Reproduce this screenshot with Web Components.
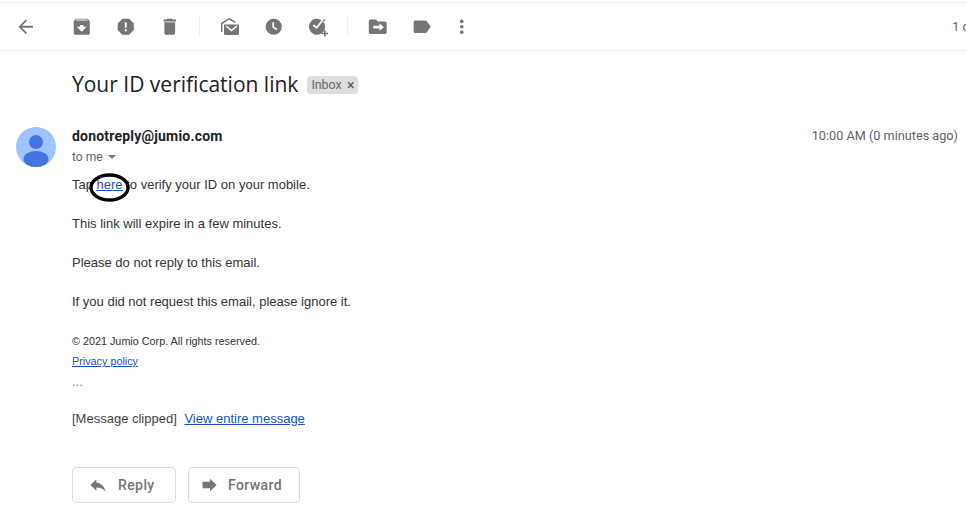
<!DOCTYPE html>
<html>
<head>
<meta charset="utf-8">
<title>Your ID verification link</title>
<style>
html, body { margin: 0; height: 514px; overflow: hidden; background: #fff; }
body { font-family: Roboto, "Liberation Sans", sans-serif; color: #222; }
a { color: #15c; }
</style>
</head>
<body>
<mail-view>
  <mail-toolbar></mail-toolbar>
  <mail-subject>Your ID verification link</mail-subject>
  <mail-header></mail-header>
  <mail-body>
    <mail-para>Tap <a href="#">here</a> to verify your ID on your mobile.</mail-para>
    <mail-para>This link will expire in a few minutes.</mail-para>
    <mail-para>Please do not reply to this email.</mail-para>
    <mail-para>If you did not request this email, please ignore it.</mail-para>
  </mail-body>
  <mail-actions></mail-actions>
</mail-view>

<script>
const ICONS = {
  back: '<path d="M20 11H7.83l5.59-5.59L12 4l-8 8 8 8 1.41-1.41L7.83 13H20v-2z"/>',
  archive: '<path d="M20.54 5.23l-1.39-1.68C18.88 3.21 18.47 3 18 3H6c-.47 0-.88.21-1.16.55L3.46 5.23C3.17 5.57 3 6.02 3 6.5V19c0 1.1.9 2 2 2h14c1.1 0 2-.9 2-2V6.5c0-.48-.17-.93-.46-1.27zM12 17.5L6.5 12H10v-2h4v2h3.5L12 17.5zM5.12 5l.81-1h12l.94 1H5.12z"/>',
  spam: '<path d="M15.73 3H8.27L3 8.27v7.46L8.27 21h7.46L21 15.73V8.27L15.73 3zM12 17.3c-.72 0-1.3-.58-1.3-1.3 0-.72.58-1.3 1.3-1.3.72 0 1.3.58 1.3 1.3 0 .72-.58 1.3-1.3 1.3zm1-4.3h-2V7h2v6z"/>',
  trash: '<path d="M6 19c0 1.1.9 2 2 2h8c1.1 0 2-.9 2-2V7H6v12zM19 4h-3.5l-1-1h-5l-1 1H5v2h14V4z"/>',
  snooze: '<path fill-rule="evenodd" d="M12 3a9 9 0 1 0 0 18 9 9 0 0 0 0-18zM10.4 7h1.8v5l3.9 2.3-.9 1.5-4.8-2.9V7z"/>',
  task: '<path fill-rule="evenodd" d="M11 3a9 9 0 0 1 5.2 1.7l-5.6 7-3-2.4-1.3 1.6 4.6 3.6 6.9-8.6A9 9 0 1 1 11 3z"/><path d="M19 16h1.8v2.6h2.7v1.8h-2.7V23H19v-2.6h-2.6v-1.8H19V16z"/><path d="M19.3 3.5l1.2.9-1.5 1.9-1.2-.9z"/>',
  move: '<path fill-rule="evenodd" d="M4 4h6l2 2h8a2 2 0 0 1 2 2v10a2 2 0 0 1-2 2H4a2 2 0 0 1-2-2V6a2 2 0 0 1 2-2zm10 4.5V11H7v3h7v2.5l5-4-5-4z"/>',
  label: '<path d="M17.63 5.84C17.27 5.33 16.67 5 16 5L5 5.01C3.9 5.01 3 5.9 3 7v10c0 1.1.9 1.99 2 1.99L16 19c.67 0 1.27-.33 1.63-.84L22 12l-4.37-6.16z"/>',
  more: '<circle cx="12" cy="6" r="2"/><circle cx="12" cy="12" r="2"/><circle cx="12" cy="18" r="2"/>',
  reply: '<path d="M10 9V5l-7 7 7 7v-4.1c5 0 8.5 1.6 11 5.1-1-5-4-10-11-11z"/>',
  forward: '<path d="M12 4.5l8 7.5-8 7.5V16H3V8h9V4.5z"/>'
};

function icon(name, size) {
  return `<svg width="${size}" height="${size}" viewBox="0 0 24 24" fill="#757575">${ICONS[name]}</svg>`;
}

// the open envelope is drawn 1:1, it does not follow the material grid
const UNREAD = `<svg width="24" height="24" viewBox="0 0 24 24" fill="#757575">
  <path d="M3.7 17V8.5L11 3.8l6.5 3.6" fill="none" stroke="#757575" stroke-width="1.5"/>
  <path d="M6 9.5h15v9a1.5 1.5 0 0 1-1.5 1.5h-12A1.5 1.5 0 0 1 6 18.5z"/>
  <path d="M8 11l5.5 4.5L19 11" fill="none" stroke="#fff" stroke-width="1.5"/>
</svg>`;

class MailView extends HTMLElement {
  constructor() {
    super();
    this.attachShadow({mode: 'open'}).innerHTML = `<style>
      :host { display: flex; flex-direction: column; padding-top: 2px; }
    </style><slot></slot>`;
  }
}

class MailToolbar extends HTMLElement {
  constructor() {
    super();
    const btn = n => `<span class="btn">${icon(n, 21.5)}</span>`;
    this.attachShadow({mode: 'open'}).innerHTML = `<style>
      :host {
        display: flex; align-items: center; height: 47px; overflow: hidden;
        border-top: 1px solid #eee; border-bottom: 1px solid #eee;
        padding-left: 14px;
      }
      .btn { display: flex; justify-content: center; align-items: center; flex: none; width: 24px; height: 24px; }
      .btn svg { display: block; }
      .group { display: flex; gap: 20px; }
      .sep { width: 1px; height: 20px; background: #eee; margin: 0 18px 0 17px; flex: none; }
      .count { margin-left: auto; margin-right: -18px; font: 12.5px Roboto, sans-serif; color: #666; white-space: nowrap; }
    </style>
    <span class="btn" style="margin-right:32px">${icon('back', 21.5)}</span>
    <div class="group">${btn('archive')}${btn('spam')}${btn('trash')}</div>
    <span class="sep"></span>
    <div class="group"><span class="btn">${UNREAD}</span>${btn('snooze')}${btn('task')}</div>
    <span class="sep"></span>
    <div class="group">${btn('move')}${btn('label')}<span class="btn" style="margin-left:-4px">${icon('more', 21.5)}</span></div>
    <span class="count">1 of 2</span>`;
  }
}

class MailSubject extends HTMLElement {
  constructor() {
    super();
    this.attachShadow({mode: 'open'}).innerHTML = `<style>
      :host { display: flex; align-items: center; padding: 18px 0 0 72px; height: 31px; }
      h1 { margin: 0; font: 400 21px/31px "Open Sans", Roboto, sans-serif; color: #222; }
      .tag {
        display: inline-flex; align-items: center; justify-content: space-between; box-sizing: border-box;
        width: 51px; height: 18px; margin: 0 0 0 9px; padding: 0 4px; border-radius: 4px; background: #ddd;
        font: 12.4px Roboto, sans-serif; color: #666;
      }
      .x { font-size: 14px; color: #555; }
    </style>
    <h1><slot></slot></h1><span class="tag">Inbox <span class="x">×</span></span>`;
  }
}

class MailHeader extends HTMLElement {
  constructor() {
    super();
    this.attachShadow({mode: 'open'}).innerHTML = `<style>
      :host { display: flex; padding: 27px 8px 0 16px; }
      svg { display: block; flex: none; margin-right: 16px; }
      .who { flex: 1; }
      .from { font: 700 14px/18px Roboto, sans-serif; letter-spacing: .2px; color: #222; }
      .to { font: 12px/20px Roboto, sans-serif; color: #5f6368; display: flex; align-items: center; gap: 5px; margin-top: 2px; }
      .caret { width: 0; height: 0; border: 4.5px solid transparent; border-top: 4.5px solid #777; border-bottom: 0; }
      .time { font: 12.7px/18px Roboto, sans-serif; color: #5f6368; }
    </style>
    <svg width="40" height="40" viewBox="0 0 40 40">
      <circle cx="20" cy="20" r="20" fill="#a0c3ff"/>
      <circle cx="20" cy="15" r="7" fill="#4374e0"/>
      <ellipse cx="20" cy="32" rx="12.5" ry="8" fill="#4374e0"/>
    </svg>
    <div class="who">
      <div class="from">donotreply@jumio.com</div>
      <div class="to">to me <span class="caret"></span></div>
    </div>
    <div class="time">10:00 AM (0 minutes ago)</div>`;
  }
}

class MailPara extends HTMLElement {
  constructor() {
    super();
    this.attachShadow({mode: 'open'}).innerHTML = `<style>
      :host { display: block; margin-bottom: 24px; font: 13px/15px "Liberation Sans", Arial, sans-serif; color: #333; }
    </style><slot></slot>`;
  }
}

class MailBody extends HTMLElement {
  constructor() {
    super();
    this.attachShadow({mode: 'open'}).innerHTML = `<style>
      :host { display: block; position: relative; padding: 0 0 0 72px; margin-top: 10px; font: 13px "Liberation Sans", Arial, sans-serif; color: #333; }
      .ring { position: absolute; left: 88px; top: -4px; }
      .foot { font-size: 10.8px; line-height: 13px; margin-top: 26px; }
      .foot div { margin-bottom: 7px; }
      .foot .dots { font-size: 13px; color: #888; }
      a { color: #15c; }
      .clip { margin-top: 23px; line-height: 15px; color: #444; }
      .clip a { margin-left: 4px; }
    </style>
    <slot></slot>
    <div class="foot">
      <div>© 2021 Jumio Corp. All rights reserved.</div>
      <div><a href="#">Privacy policy</a></div>
      <div class="dots">...</div>
    </div>
    <div class="clip">[Message clipped] <a href="#">View entire message</a></div>
    <svg class="ring" width="44" height="30" viewBox="0 0 44 30">
      <ellipse cx="21.5" cy="14.5" rx="18.5" ry="12.5" fill="none" stroke="#000" stroke-width="3.4"/>
    </svg>`;
  }
}

class MailActions extends HTMLElement {
  constructor() {
    super();
    this.attachShadow({mode: 'open'}).innerHTML = `<style>
      :host { display: flex; gap: 12px; padding: 41px 0 0 72px; }
      .b {
        display: flex; align-items: center; box-sizing: border-box; height: 36px;
        border: 1px solid #dadce0; border-radius: 4px;
        font: 500 14px Roboto, sans-serif; letter-spacing: .4px; color: #757575;
      }
    </style>
    <div class="b" style="width:104px;padding-left:15px"><span style="display:flex;margin-right:10px">${icon('reply', 20)}</span>Reply</div>
    <div class="b" style="width:112px;padding-left:11px"><span style="display:flex;margin-right:8px">${icon('forward', 20)}</span>Forward</div>`;
  }
}

customElements.define('mail-view', MailView);
customElements.define('mail-toolbar', MailToolbar);
customElements.define('mail-subject', MailSubject);
customElements.define('mail-header', MailHeader);
customElements.define('mail-para', MailPara);
customElements.define('mail-body', MailBody);
customElements.define('mail-actions', MailActions);
</script>
</body>
</html>
